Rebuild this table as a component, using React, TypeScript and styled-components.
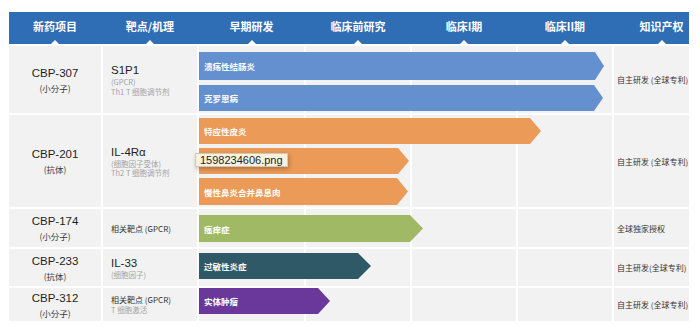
import React from 'react';
import styled, { createGlobalStyle } from 'styled-components';

const GlobalStyle = createGlobalStyle`
  html, body {
    margin: 0;
    padding: 0;
    background: #ffffff;
  }
  body {
    font-family: "Noto Sans CJK SC", "Noto Sans", sans-serif;
  }
`

const COLS = '92px 94px 105px 104px 104px 94px 75px';

const Page = styled.div`
    padding: 12px 0 0 9px;
`

const Table = styled.div`
    position: relative;
    width: 680px;
    display: flex;
    flex-direction: column;
    gap: 2px;
`

const Header = styled.div`
    display: grid;
    grid-template-columns: ${COLS};
    column-gap: 2px;
    height: 32px;
    background: #2f6db5;
`

const HeaderCell = styled.div<{ $shift?: number }>`
    position: relative;
    display: flex;
    align-items: center;
    justify-content: center;
    padding: 0 0 4px ${p => p.$shift ?? 0}px;
    color: #ffffff;
    font-size: 11px;
    font-weight: 700;
    white-space: nowrap;

    &::after{
        content: '';
        position: absolute;
        bottom: 0;
        left: calc(50% + ${p => (p.$shift ?? 0) / 2}px - 4px);
        border-left: 4px solid transparent;
        border-right: 4px solid transparent;
        border-bottom: 4px solid #ffffff;
    }
`

const Row = styled.div<{ $h: number }>`
    display: grid;
    grid-template-columns: ${COLS};
    grid-template-rows: ${p => p.$h}px;
    column-gap: 2px;
`

const Cell = styled.div<{ $col: number }>`
    grid-row: 1;
    grid-column: ${p => p.$col};
    background: #f2f2f2;
`

const ProjectCell = styled(Cell)`
    display: flex;
    flex-direction: column;
    align-items: center;
    justify-content: center;

    .code{
        font-family: "Liberation Sans", Arial, sans-serif;
        font-size: 11.5px;
        line-height: 14px;
        color: #1e1e1e;
    }

    .kind{
        margin-top: 2px;
        font-size: 8.5px;
        line-height: 12px;
        color: #3a3a3a;
    }
`

const TargetCell = styled(Cell)`
    display: flex;
    flex-direction: column;
    justify-content: center;
    padding-left: 8px;

    .main{
        font-family: "Liberation Sans", Arial, sans-serif;
        font-size: 11.5px;
        line-height: 14px;
        color: #1e1e1e;
    }

    .plain{
        font-size: 8px;
        line-height: 11px;
        color: #333333;
    }

    .note{
        font-size: 7.5px;
        line-height: 9.5px;
        color: #a3a3a3;
    }
`

const IpCell = styled(Cell)`
    display: flex;
    align-items: center;
    padding-left: 3px;
    font-size: 8px;
    color: #333333;
    white-space: nowrap;
`

const BarTrack = styled.div<{ $top: number; $gap: number }>`
    grid-row: 1;
    grid-column: 3 / 7;
    z-index: 1;
    display: flex;
    flex-direction: column;
    align-items: flex-start;
    gap: ${p => p.$gap}px;
    padding-top: ${p => p.$top}px;
`

const Bar = styled.div<{ $color: string; $h: number; $tip: number }>`
    box-sizing: border-box;
    display: flex;
    align-items: center;
    height: ${p => p.$h}px;
    padding-left: 5px;
    background: ${p => p.$color};
    clip-path: polygon(0 0, calc(100% - ${p => p.$tip}px) 0, 100% 50%, calc(100% - ${p => p.$tip}px) 100%, 0 100%);
    color: #ffffff;
    font-size: 8.5px;
    font-weight: 700;
    white-space: nowrap;
`

const FileTip = styled.div`
    position: absolute;
    left: 186px;
    top: 141px;
    z-index: 5;
    padding: 0 4px;
    background: #f6f1e1;
    border: 1px solid #d2c9b1;
    box-shadow: 1px 2px 4px rgba(0, 0, 0, 0.25);
    font-family: "Liberation Sans", Arial, sans-serif;
    font-size: 11px;
    line-height: 12px;
    color: #1e1e1e;
`

const BLUE = '#6590d0';
const ORANGE = '#eb9a57';
const GREEN = '#a0b964';
const TEAL = '#2f5966';
const PURPLE = '#6a389a';

interface BarData {
    label: string,
    width: number,
    color: string,
    h: number,
    tip: number,
}

interface RowData {
    h: number,
    code: string,
    kind: string,
    target: string,
    plainTarget?: boolean,
    notes: string[],
    ip: string,
    top: number,
    gap: number,
    bars: BarData[],
}

const headers = ['新药项目', '靶点/机理', '早期研发', '临床前研究', '临床I期', '临床II期'];

const rows: RowData[] = [
    {
        h: 67, code: 'CBP-307', kind: '(小分子)', target: 'S1P1',
        notes: ['(GPCR)', 'Th1 T 细胞调节剂'], ip: '自主研发 (全球专利)', top: 6, gap: 5,
        bars: [
            { label: '溃疡性结肠炎', width: 405, color: BLUE, h: 28, tip: 9 },
            { label: '克罗恩病', width: 404, color: BLUE, h: 26, tip: 9 },
        ],
    },
    {
        h: 92, code: 'CBP-201', kind: '(抗体)', target: 'IL-4Rα',
        notes: ['(细胞因子受体)', 'Th2 T 细胞调节剂'], ip: '自主研发 (全球专利)', top: 3, gap: 4,
        bars: [
            { label: '特应性皮炎', width: 342, color: ORANGE, h: 26, tip: 11 },
            // label of this bar is hidden under the file tooltip
            { label: '', width: 210, color: ORANGE, h: 26, tip: 11 },
            { label: '慢性鼻炎合并鼻息肉', width: 209, color: ORANGE, h: 27, tip: 11 },
        ],
    },
    {
        h: 38, code: 'CBP-174', kind: '(小分子)', target: '相关靶点 (GPCR)', plainTarget: true,
        notes: [], ip: '全球独家授权', top: 6, gap: 0,
        bars: [{ label: '瘙痒症', width: 224, color: GREEN, h: 27, tip: 13 }],
    },
    {
        h: 37, code: 'CBP-233', kind: '(抗体)', target: 'IL-33',
        notes: ['(细胞因子)'], ip: '自主研发(全球专利)', top: 4, gap: 0,
        bars: [{ label: '过敏性炎症', width: 172, color: TEAL, h: 26, tip: 13 }],
    },
    {
        h: 33, code: 'CBP-312', kind: '(小分子)', target: '相关靶点 (GPCR)', plainTarget: true,
        notes: ['T 细胞激活'], ip: '自主研发 (全球专利)', top: 0, gap: 0,
        bars: [{ label: '实体肿瘤', width: 131, color: PURPLE, h: 26, tip: 12 }],
    },
];

const PipelineRow: React.FunctionComponent<{ row: RowData }> = ({ row }) => (
    <Row $h={row.h}>
        <ProjectCell $col={1}>
            <span className='code'>{row.code}</span>
            <span className='kind'>{row.kind}</span>
        </ProjectCell>
        <TargetCell $col={2}>
            <span className={row.plainTarget ? 'plain' : 'main'}>{row.target}</span>
            {row.notes.map(note => <span className='note' key={note}>{note}</span>)}
        </TargetCell>
        {[3, 4, 5, 6].map(col => <Cell $col={col} key={col} />)}
        <BarTrack $top={row.top} $gap={row.gap}>
            {row.bars.map((bar, i) => (
                <Bar key={i} $color={bar.color} $h={bar.h} $tip={bar.tip} style={{ width: bar.width }}>
                    {bar.label}
                </Bar>
            ))}
        </BarTrack>
        <IpCell $col={7}>{row.ip}</IpCell>
    </Row>
)

const App: React.FunctionComponent = () => (
    <Page>
        <GlobalStyle />
        <Table>
            <Header>
                {headers.map(h => <HeaderCell key={h}>{h}</HeaderCell>)}
                <HeaderCell $shift={20}>知识产权</HeaderCell>
            </Header>
            {rows.map(row => <PipelineRow row={row} key={row.code} />)}
            <FileTip>1598234606.png</FileTip>
        </Table>
    </Page>
)

export default App;
